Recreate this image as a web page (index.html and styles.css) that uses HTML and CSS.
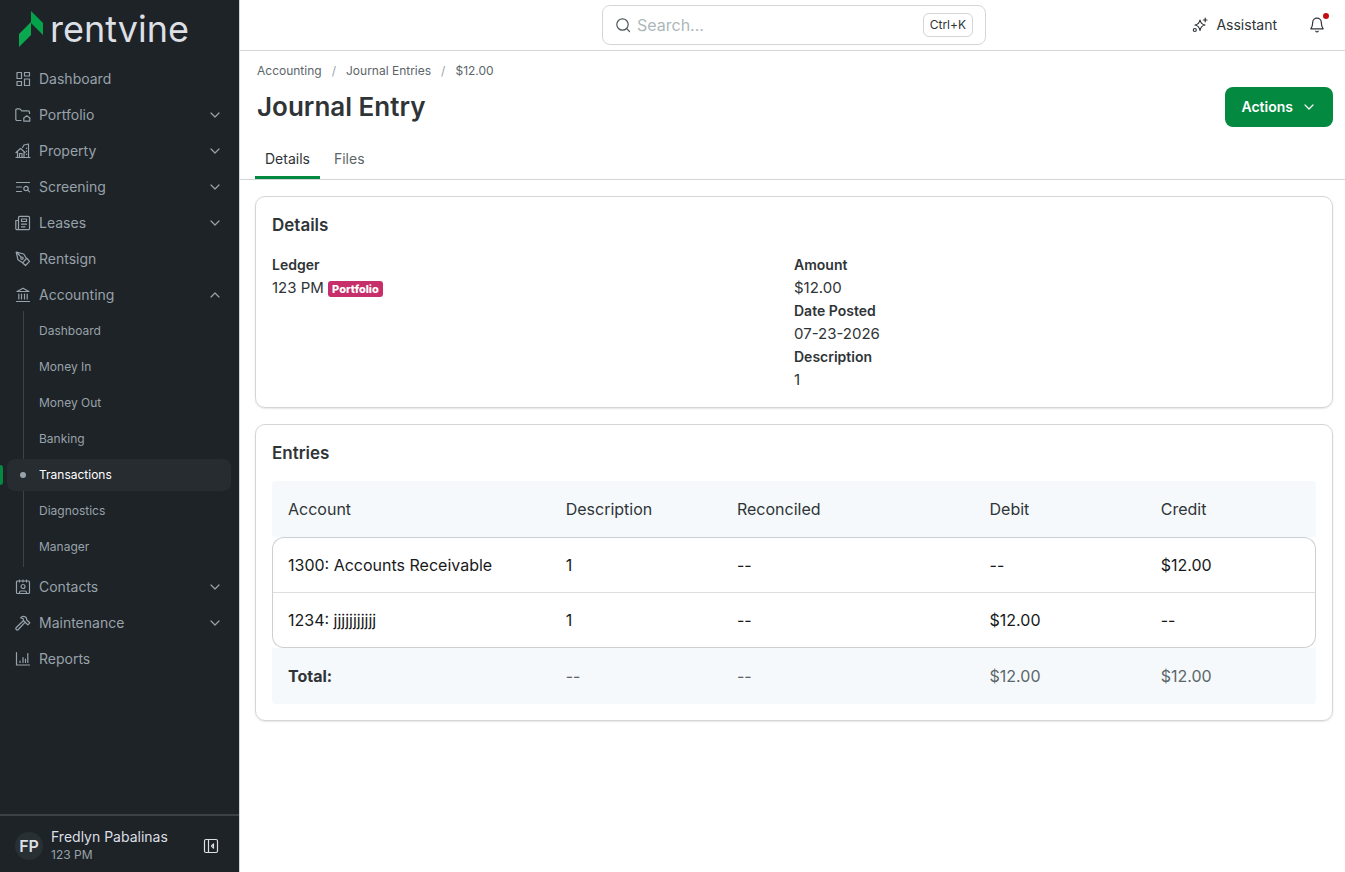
FILE: index.html
```
<!DOCTYPE html>
<html lang="en">
<head>
    <meta charset="UTF-8">
    <meta name="viewport" content="width=device-width, initial-scale=1.0">
    <title>Journal Entry</title>
    <link rel="stylesheet" href="styles.css">
</head>
<body>
    <svg class="sprite" aria-hidden="true">
        <symbol id="chevron" viewBox="0 0 16 16"><path d="M4 6l4 4 4-4"/></symbol>
    </svg>

    <aside class="sidebar">
        <a class="logo" href="#">
            <svg class="logo-mark" viewBox="0 0 26 36">
                <path class="logo-light" d="M1 23L13 11V24L1 36z"/>
                <path class="logo-dark" d="M13 0L25 12V24L13 12z"/>
            </svg>
            <span class="logo-text">rentvine</span>
        </a>

        <nav class="menu">
            <a class="menu-item" href="#">
                <svg class="icon" viewBox="0 0 16 16"><path d="M2 1.500h4.500v6H2zM2 10.500h4.500v4H2zM9.500 1.500h5v3.500h-5zM9.500 8h5v6.500h-5z"/></svg>
                <span>Dashboard</span>
            </a>
            <a class="menu-item" href="#">
                <svg class="icon" viewBox="0 0 16 16"><path d="M6 13.500H2a1.200 1.200 0 0 1-1.200-1.200V3A1.200 1.200 0 0 1 2 1.800h2.800l2 2h6.500A1.200 1.200 0 0 1 14.500 5v1.500"/><path d="M8.800 14.200v-3.200l3-2.200 3 2.200v3.200z"/></svg>
                <span>Portfolio</span>
                <svg class="icon arrow"><use href="#chevron"/></svg>
            </a>
            <a class="menu-item" href="#">
                <svg class="icon" viewBox="0 0 16 16"><path d="M1 14.500h14M2.500 14.500V9M1 9.500L5.500 5.500l4.500 4M9 14.500V9M4.500 14.500v-4h2.500v4M7.500 4.500l1.500-2.500 4.500-1v13.500M11.500 5v.5M11.500 8v.5M11.500 11v.5"/></svg>
                <span>Property</span>
                <svg class="icon arrow"><use href="#chevron"/></svg>
            </a>
            <a class="menu-item" href="#">
                <svg class="icon" viewBox="0 0 16 16"><path d="M1.500 3.500h13M1.500 8h5M1.500 12.500h5"/><circle cx="11" cy="9.500" r="2.200"/><path d="M12.800 11.200l1.700 1.700"/></svg>
                <span>Screening</span>
                <svg class="icon arrow"><use href="#chevron"/></svg>
            </a>
            <a class="menu-item" href="#">
                <svg class="icon" viewBox="0 0 16 16"><path d="M3.500 13V2.500A1.200 1.200 0 0 1 4.700 1.300h8.600A1.200 1.200 0 0 1 14.500 2.500v11a1.200 1.200 0 0 1-1.200 1.200H2A1.200 1.200 0 0 1 .8 13.500V5.500h2.700V13A1.500 1.500 0 0 1 2 14.700M6.500 4h5v2.500h-5zM6.500 9.200h5M6.500 11.800h3.500"/></svg>
                <span>Leases</span>
                <svg class="icon arrow"><use href="#chevron"/></svg>
            </a>
            <a class="menu-item" href="#">
                <svg class="icon" viewBox="0 0 16 16"><path d="M1.200 1.200l7.500 1.800 2.800 4.500-4 4.300-4.500-3zM1.200 1.200l5 5M12 7.500l2.500 2.800-4 4.200-3-2.700"/><circle cx="7" cy="7.200" r="1.200"/></svg>
                <span>Rentsign</span>
            </a>
            <a class="menu-item" href="#">
                <svg class="icon" viewBox="0 0 16 16"><path d="M2 4.500L8 1.200l6 3.300zM3.800 7v5M6.500 7v5M9.500 7v5M12.200 7v5M1.500 14.500h13"/></svg>
                <span>Accounting</span>
                <svg class="icon arrow open"><use href="#chevron"/></svg>
            </a>
            <div class="submenu">
                <a class="submenu-item" href="#">Dashboard</a>
                <a class="submenu-item" href="#">Money In</a>
                <a class="submenu-item" href="#">Money Out</a>
                <a class="submenu-item" href="#">Banking</a>
                <a class="submenu-item active" href="#">Transactions</a>
                <a class="submenu-item" href="#">Diagnostics</a>
                <a class="submenu-item" href="#">Manager</a>
            </div>
            <a class="menu-item" href="#">
                <svg class="icon" viewBox="0 0 16 16"><rect x="1.500" y="2" width="13" height="12.500" rx="1"/><path d="M4.500 1V3M8 1V3M11.500 1V3M4.500 14v-.5q0-1.500 1.500-1.500h4q1.500 0 1.500 1.500v.5"/><circle cx="8" cy="7.500" r="2"/></svg>
                <span>Contacts</span>
                <svg class="icon arrow"><use href="#chevron"/></svg>
            </a>
            <a class="menu-item" href="#">
                <svg class="icon" viewBox="0 0 16 16"><path d="M8.300 5.800l-7 6.700a1.300 1.300 0 0 0 2 2l6.700-7.200M5.500 2.800Q8 .2 11.200 2.500L11.800 5l3 2.800-2 2L10 7 8.300 5.500V3.800z"/></svg>
                <span>Maintenance</span>
                <svg class="icon arrow"><use href="#chevron"/></svg>
            </a>
            <a class="menu-item" href="#">
                <svg class="icon" viewBox="0 0 16 16"><path d="M1.500 1.500v12.500h13M5 11.500v-1.500M8 11.500v-5M10.500 11.500V8M12.800 11.500V2.500"/></svg>
                <span>Reports</span>
            </a>
        </nav>

        <div class="user">
            <span class="avatar">FP</span>
            <div class="user-info">
                <span class="user-name">Fredlyn Pabalinas</span>
                <span class="user-company">123 PM</span>
            </div>
            <button type="button" class="collapse" aria-label="Collapse menu">
                <svg class="icon" viewBox="0 0 16 16"><rect x="1.500" y="1.500" width="13" height="13" rx="1.500"/><path d="M5.500 1.500v13M10.500 5.800L8.500 8l2 2.200z"/></svg>
            </button>
        </div>
    </aside>

    <div class="main">
        <header class="topbar">
            <label class="search">
                <svg class="icon" viewBox="0 0 16 16"><circle cx="7.500" cy="7.500" r="5.700"/><path d="M11.700 11.700l2.800 2.800"/></svg>
                <input type="text" name="search" placeholder="Search..." aria-label="Search">
                <kbd>Ctrl+K</kbd>
            </label>
            <div class="topbar-right">
                <button type="button" class="assistant">
                    <svg class="icon" viewBox="0 0 16 16"><path d="M8 3q.8 4.200 5 5-4.200.8-5 5.500-.8-4.700-5-5.500 4.200-.8 5-5zM13.200 1.200v3.600M11.400 3h3.600"/><circle cx="2.800" cy="13" r="1.500"/></svg>
                    <span>Assistant</span>
                </button>
                <button type="button" class="bell" aria-label="Notifications">
                    <svg class="icon" viewBox="0 0 16 16"><path d="M8 1.200a4.300 4.300 0 0 0-4.300 4.300c0 3.500-.8 4.800-1.900 6.300h12.400c-1.100-1.500-1.900-2.800-1.900-6.300A4.300 4.300 0 0 0 8 1.200zM6.800 14.200a1.400 1.400 0 0 0 2.400 0"/></svg>
                    <span class="dot"></span>
                </button>
            </div>
        </header>

        <div class="page-header">
            <nav class="breadcrumb">
                <a href="#">Accounting</a>
                <span class="slash">/</span>
                <a href="#">Journal Entries</a>
                <span class="slash">/</span>
                <span>$12.00</span>
            </nav>
            <div class="title-row">
                <h1>Journal Entry</h1>
                <button type="button" class="actions">
                    Actions
                    <svg class="icon"><use href="#chevron"/></svg>
                </button>
            </div>
            <nav class="tabs">
                <a class="tab active" href="#">Details</a>
                <a class="tab" href="#">Files</a>
            </nav>
        </div>

        <main class="content">
            <section class="card">
                <h2>Details</h2>
                <div class="details">
                    <dl>
                        <dt>Ledger</dt>
                        <dd>123 PM <span class="badge">Portfolio</span></dd>
                    </dl>
                    <dl>
                        <dt>Amount</dt>
                        <dd>$12.00</dd>
                        <dt>Date Posted</dt>
                        <dd>07-23-2026</dd>
                        <dt>Description</dt>
                        <dd>1</dd>
                    </dl>
                </div>
            </section>

            <section class="card">
                <h2>Entries</h2>
                <table class="entries">
                    <colgroup>
                        <col class="col-account">
                        <col class="col-small">
                        <col class="col-reconciled">
                        <col class="col-small">
                        <col class="col-small">
                    </colgroup>
                    <thead>
                        <tr>
                            <th>Account</th>
                            <th>Description</th>
                            <th>Reconciled</th>
                            <th>Debit</th>
                            <th>Credit</th>
                        </tr>
                    </thead>
                    <tbody>
                        <tr>
                            <td>1300: Accounts Receivable</td>
                            <td>1</td>
                            <td>--</td>
                            <td>--</td>
                            <td>$12.00</td>
                        </tr>
                        <tr>
                            <td>1234: jjjjjjjjjjj</td>
                            <td>1</td>
                            <td>--</td>
                            <td>$12.00</td>
                            <td>--</td>
                        </tr>
                    </tbody>
                    <tfoot>
                        <tr>
                            <th>Total:</th>
                            <td>--</td>
                            <td>--</td>
                            <td>$12.00</td>
                            <td>$12.00</td>
                        </tr>
                    </tfoot>
                </table>
            </section>
        </main>
    </div>
</body>
</html>
```

FILE: styles.css
```
* {
    box-sizing: border-box;
}
body {
    margin: 0;
    display: flex;
    min-height: 100vh;
    background-color: #fff;
    color: #2f3437;
    font-family: Inter, sans-serif;
    font-size: 14px;
    line-height: 18px;
}
a {
    color: inherit;
    text-decoration: none;
}
button {
    border: none;
    padding: 0;
    background: none;
    color: inherit;
    font-family: inherit;
    font-size: 14px;
    line-height: 18px;
    cursor: pointer;
}
.sprite {
    display: none;
}
.icon {
    width: 16px;
    height: 16px;
    flex: none;
    fill: none;
    stroke: currentColor;
    stroke-width: 1.2;
    stroke-linecap: round;
    stroke-linejoin: round;
}

/* sidebar */
.sidebar {
    width: 240px;
    flex: none;
    display: flex;
    flex-direction: column;
    background-color: #1e2327;
    border-right: 1px solid #d3d6d8;
    color: #98a2aa;
}
.logo {
    display: flex;
    align-items: center;
    gap: 6px;
    height: 61px;
    padding: 0 0 4px 18px;
}
.logo-mark {
    width: 26px;
    height: 36px;
}
.logo-light {
    fill: #0aa84f;
}
.logo-dark {
    fill: #04a24a;
}
.logo-text {
    color: #dcdfe4;
    font-size: 36px;
    line-height: 40px;
}
.menu {
    flex: 1;
}
.menu-item {
    display: flex;
    align-items: center;
    gap: 8px;
    height: 36px;
    padding: 0 16px 0 15px;
}
.arrow {
    margin-left: auto;
}
.open {
    transform: rotate(180deg);
}
.submenu {
    display: flex;
    flex-direction: column;
    gap: 4px;
    margin: -2px 0 2px;
    padding: 4px 8px 4px 7px;
    background: linear-gradient(#3c4246, #3c4246) 23px 0 / 1px 100% no-repeat;
}
.submenu-item {
    display: flex;
    align-items: center;
    height: 32px;
    padding-left: 32px;
    font-size: 12px;
    border-radius: 8px;
}
.submenu-item.active {
    position: relative;
    background-color: #272c30;
    color: #fff;
}
.submenu-item.active::before {
    content: "";
    position: absolute;
    left: -7px;
    width: 3px;
    height: 20px;
    background-color: #048940;
    border-radius: 0 3px 3px 0;
}
.submenu-item.active::after {
    content: "";
    position: absolute;
    left: 13px;
    width: 6px;
    height: 6px;
    background-color: #98a2aa;
    border-radius: 50%;
}
.user {
    display: flex;
    align-items: center;
    height: 58px;
    padding: 4px 20px 0 15px;
    border-top: 2px solid #3c4246;
}
.avatar {
    width: 28px;
    height: 28px;
    border-radius: 50%;
    background-color: #283033;
    color: #dcdfe4;
    font-size: 16px;
    font-weight: 600;
    line-height: 28px;
    text-align: center;
}
.user-info {
    flex: 1;
    display: flex;
    flex-direction: column;
    margin-left: 8px;
}
.user-name {
    color: #dcdfe4;
}
.user-company {
    font-size: 12px;
}
.collapse {
    display: flex;
    color: #dcdfe4;
}

/* top bar */
.main {
    flex: 1;
    min-width: 0;
}
.topbar {
    display: grid;
    grid-template-columns: 1fr 384px 1fr;
    align-items: center;
    height: 51px;
    padding: 0 13px 0 16px;
    border-bottom: 1px solid #d3d6d8;
}
.search {
    grid-column: 2;
    display: flex;
    align-items: center;
    gap: 6px;
    height: 40px;
    padding: 0 12px;
    border: 1px solid #d3d6d8;
    border-radius: 8px;
    color: #4e585c;
}
.search input {
    flex: 1;
    min-width: 0;
    padding: 0;
    border: none;
    outline: none;
    background: none;
    font-family: inherit;
    font-size: 16px;
}
.search input::placeholder {
    color: #adb8b9;
}
.search kbd {
    padding: 0 6px;
    border: 1px solid #d3d6d8;
    border-radius: 6px;
    color: #2f3437;
    font-family: inherit;
    font-size: 12px;
    line-height: 22px;
}
.topbar-right {
    display: flex;
    align-items: center;
    justify-content: flex-end;
    gap: 32px;
    padding-right: 7px;
}
.assistant {
    display: flex;
    align-items: center;
    gap: 8px;
}
.bell {
    position: relative;
    display: flex;
}
.dot {
    position: absolute;
    top: -4px;
    right: -4px;
    width: 6px;
    height: 6px;
    border-radius: 50%;
    background-color: #c40d12;
}

/* page header */
.page-header {
    padding: 10px 12px 0 15px;
    border-bottom: 1px solid #d3d6d8;
}
.breadcrumb {
    display: flex;
    gap: 10px;
    padding-left: 2px;
    color: #5c6669;
    font-size: 12px;
    line-height: 20px;
}
.slash {
    color: #9aa3a6;
}
.title-row {
    display: flex;
    align-items: center;
    justify-content: space-between;
    margin-top: 6px;
    padding-left: 2px;
}
h1 {
    margin: 0;
    font-size: 26px;
    font-weight: 600;
    line-height: 40px;
}
.actions {
    display: flex;
    align-items: center;
    gap: 8px;
    height: 40px;
    padding: 0 16px;
    border-radius: 8px;
    background-color: #048940;
    color: #fff;
    font-weight: 600;
}
.tabs {
    display: flex;
    gap: 4px;
    margin-top: 12px;
}
.tab {
    height: 40px;
    padding: 0 10px;
    border-bottom: 3px solid transparent;
    color: #5c6669;
    line-height: 40px;
}
.tab.active {
    border-bottom-color: #048940;
    color: #2f3437;
}

/* cards */
.content {
    display: flex;
    flex-direction: column;
    gap: 16px;
    padding: 16px 12px 16px 15px;
}
.card {
    padding: 16px;
    border: 1px solid #d3d6d8;
    border-radius: 10px;
    box-shadow: 0 1px 2px rgba(0, 0, 0, 0.1);
}
h2 {
    margin: 0 0 16px;
    font-size: 17px;
    font-weight: 600;
    line-height: 24px;
}
.details {
    display: grid;
    grid-template-columns: 1fr 1fr;
    line-height: 23px;
}
dl {
    margin: 0;
}
dt {
    font-weight: 600;
}
dd {
    height: 23px;
    margin: 0;
    font-size: 15px;
}
.badge {
    display: inline-block;
    padding: 0 4px;
    border-radius: 3px;
    background-color: #c62f69;
    color: #fff;
    font-size: 11px;
    font-weight: 800;
    line-height: 16px;
}

/* entries table */
.entries {
    width: 100%;
    table-layout: fixed;
    border-collapse: separate;
    border-spacing: 0;
    font-size: 16px;
    line-height: 24px;
}
.col-account {
    width: 26.6%;
}
.col-small {
    width: 16.4%;
}
.col-reconciled {
    width: 24.2%;
}
.entries th,
.entries td {
    padding: 15px 16px;
    text-align: left;
}
.entries thead th,
.entries tfoot th,
.entries tfoot td {
    padding: 16px;
    background-color: #f5f9fc;
}
.entries thead th {
    font-weight: 400;
}
.entries tfoot td {
    color: #5c6669;
}
.entries thead th:first-child {
    border-top-left-radius: 4px;
}
.entries thead th:last-child {
    border-top-right-radius: 4px;
}
.entries tfoot th {
    border-bottom-left-radius: 4px;
    font-weight: 700;
}
.entries tfoot td:last-child {
    border-bottom-right-radius: 4px;
}
.entries tbody td {
    border-bottom: 1px solid #dcdfe1;
    color: #17191b;
}
.entries tbody tr:first-child td {
    border-top: 1px solid #cdd0d2;
}
.entries tbody tr:last-child td {
    border-bottom-color: #cdd0d2;
}
.entries tbody td:first-child {
    border-left: 1px solid #cdd0d2;
    padding-left: 15px;
}
.entries tbody td:last-child {
    border-right: 1px solid #cdd0d2;
}
.entries tbody tr:first-child td:first-child {
    border-top-left-radius: 12px;
}
.entries tbody tr:first-child td:last-child {
    border-top-right-radius: 12px;
}
.entries tbody tr:last-child td:first-child {
    border-bottom-left-radius: 12px;
}
.entries tbody tr:last-child td:last-child {
    border-bottom-right-radius: 12px;
}
```
